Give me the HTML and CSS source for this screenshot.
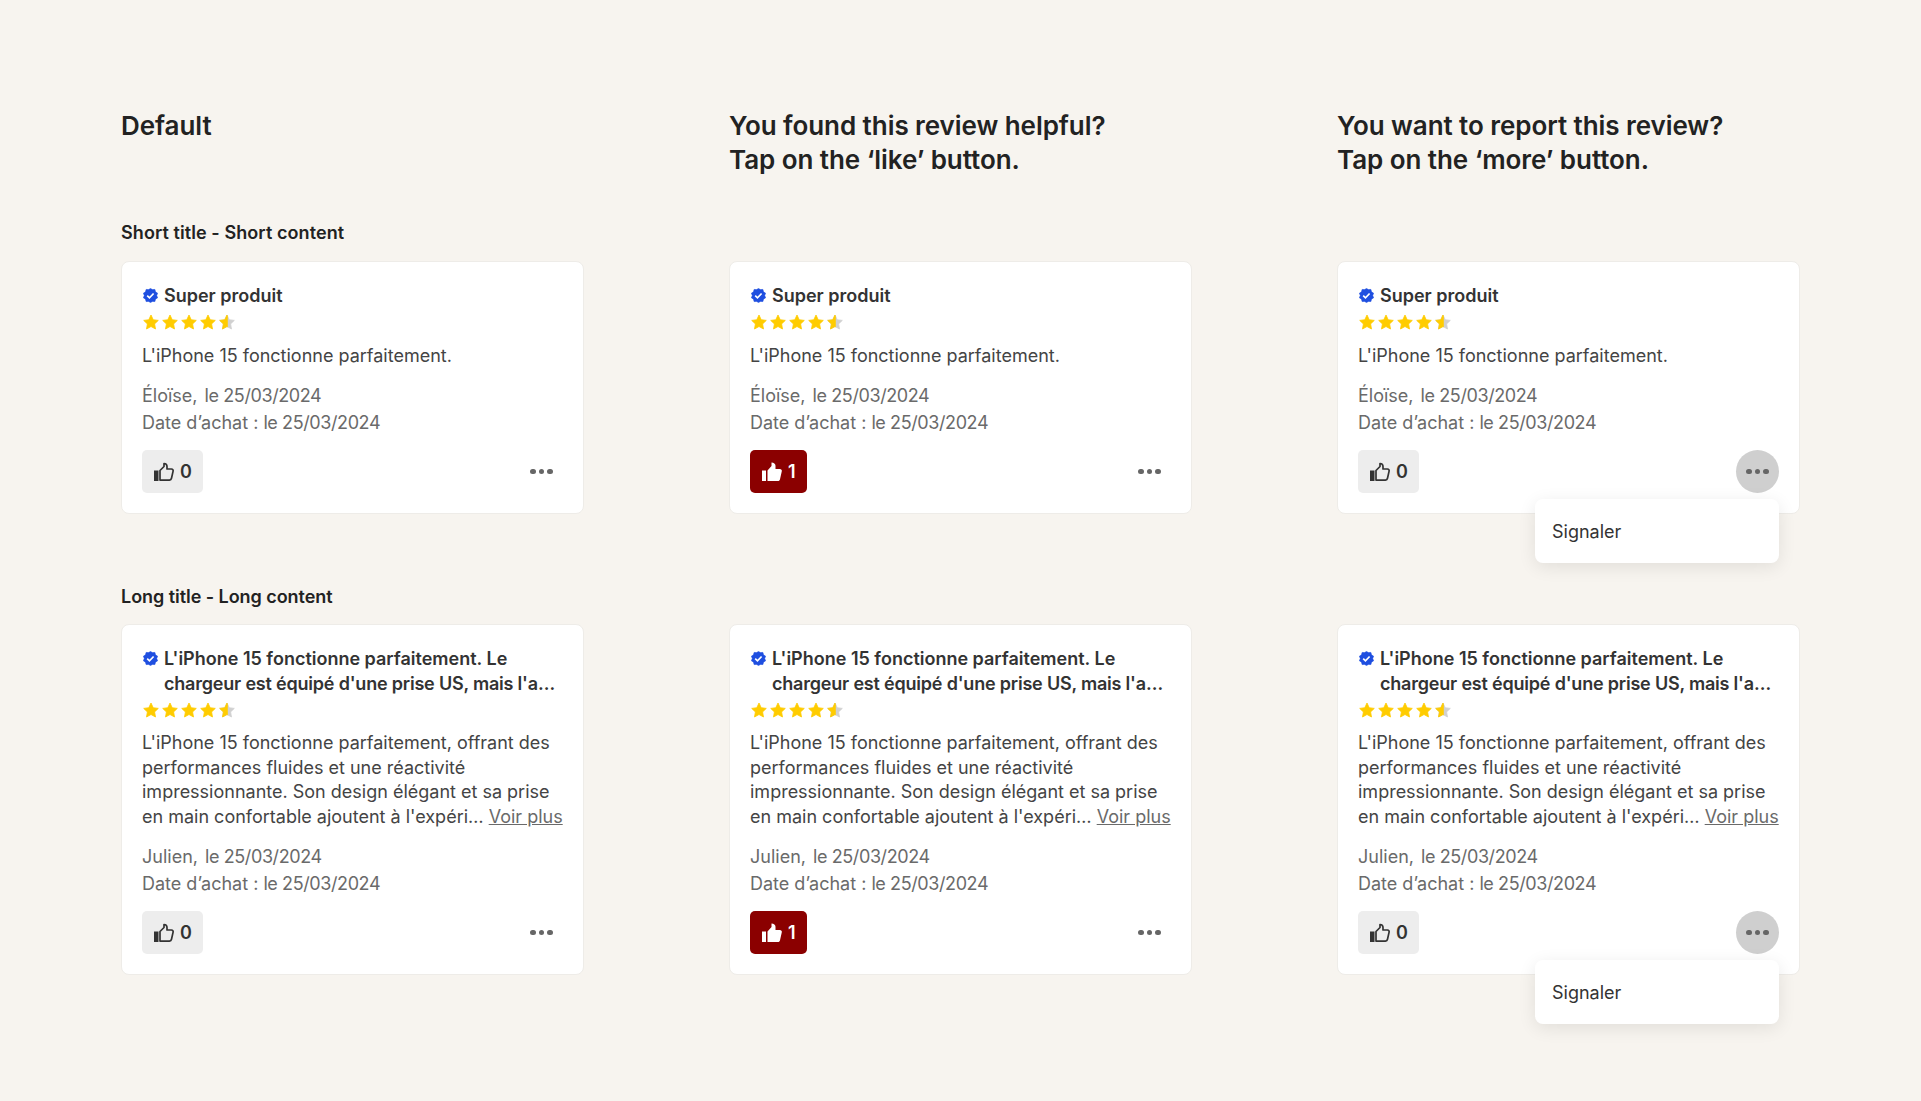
FILE: index.html
```html
<!DOCTYPE html>
<html lang="fr">
<head>
    <meta charset="UTF-8">
    <meta name="viewport" content="width=device-width, initial-scale=1.0">
    <title>Review card</title>
    <link rel="stylesheet" href="styles.css">
</head>
<body>
    <svg class="defs" width="0" height="0">
        <defs>
            <symbol id="badge" viewBox="0 0 16 16">
                <polygon fill="#1f4fe0" stroke="#1f4fe0" stroke-width="0.6" stroke-linejoin="round" points="8,0.5 10.04,1.72 12.7,1.53 13.34,4.12 15.61,5.53 14.6,8 15.61,10.47 13.34,11.88 12.7,14.47 10.04,14.28 8,15.5 5.96,14.28 3.3,14.47 2.66,11.88 0.39,10.47 1.4,8 0.39,5.53 2.66,4.12 3.3,1.53 5.96,1.72"/>
                <path fill="none" stroke="#fff" stroke-width="1.8" d="M4.5 8.2l2.4 2.3 4.4-4.6"/>
            </symbol>
            <symbol id="star" viewBox="0 0 16 16">
                <path stroke-width="0.8" stroke-linejoin="round" d="M8 1l2.2 4.7 5.1.7-3.7 3.5.9 5.1L8 12.5l-4.5 2.5.9-5.1L.7 6.4l5.1-.7z"/>
            </symbol>
            <symbol id="thumb-line" viewBox="0 0 22 22">
                <path fill="#333" d="M1 9.5h4.5V20H1z"/>
                <path fill="none" stroke="#333" stroke-width="1.7" stroke-linejoin="round" d="M7 9.5L11 5.5V2.5c1.8 0 3 1.3 3 3V8h4.5c1.2 0 1.9 1 1.6 2.1l-1.6 7.2c-.2 1-1 1.8-2 1.8H7z"/>
            </symbol>
            <symbol id="thumb-full" viewBox="0 0 22 22">
                <path fill="#fff" d="M1 9.5h4V20H1zM6.5 9.5L10.5 5V1.5c2.3 0 4 1.5 4 3.3V8h4.3c1.4 0 2.3 1 2 2.2l-1.8 8c-.2 1-1 1.8-2 1.8H6.5z"/>
            </symbol>
        </defs>
    </svg>

    <main class="board">
        <h2 class="col-title">Default</h2>
        <h2 class="col-title">You found this review helpful?<br>Tap on the ‘like’ button.</h2>
        <h2 class="col-title">You want to report this review?<br>Tap on the ‘more’ button.</h2>

        <h3 class="row-title">Short title - Short content</h3>

        <article class="card">
            <h4 class="review-title"><svg class="badge"><use href="#badge"/></svg>Super produit</h4>
            <div class="stars"><svg class="star"><use href="#star"/></svg><svg class="star"><use href="#star"/></svg><svg class="star"><use href="#star"/></svg><svg class="star"><use href="#star"/></svg><span class="half"><svg class="star off"><use href="#star"/></svg><svg class="star half-on"><use href="#star"/></svg></span></div>
            <p class="review-text">L'iPhone 15 fonctionne parfaitement.</p>
            <p class="meta"><span class="author">Éloïse,</span> <span class="date">le 25/03/2024</span><br>Date d’achat : <span class="date">le 25/03/2024</span></p>
            <div class="actions">
                <button class="like"><svg class="thumb"><use href="#thumb-line"/></svg>0</button>
                <button class="more"><i></i><i></i><i></i></button>
            </div>
        </article>
        <article class="card">
            <h4 class="review-title"><svg class="badge"><use href="#badge"/></svg>Super produit</h4>
            <div class="stars"><svg class="star"><use href="#star"/></svg><svg class="star"><use href="#star"/></svg><svg class="star"><use href="#star"/></svg><svg class="star"><use href="#star"/></svg><span class="half"><svg class="star off"><use href="#star"/></svg><svg class="star half-on"><use href="#star"/></svg></span></div>
            <p class="review-text">L'iPhone 15 fonctionne parfaitement.</p>
            <p class="meta"><span class="author">Éloïse,</span> <span class="date">le 25/03/2024</span><br>Date d’achat : <span class="date">le 25/03/2024</span></p>
            <div class="actions">
                <button class="like liked"><svg class="thumb"><use href="#thumb-full"/></svg>1</button>
                <button class="more"><i></i><i></i><i></i></button>
            </div>
        </article>
        <article class="card">
            <h4 class="review-title"><svg class="badge"><use href="#badge"/></svg>Super produit</h4>
            <div class="stars"><svg class="star"><use href="#star"/></svg><svg class="star"><use href="#star"/></svg><svg class="star"><use href="#star"/></svg><svg class="star"><use href="#star"/></svg><span class="half"><svg class="star off"><use href="#star"/></svg><svg class="star half-on"><use href="#star"/></svg></span></div>
            <p class="review-text">L'iPhone 15 fonctionne parfaitement.</p>
            <p class="meta"><span class="author">Éloïse,</span> <span class="date">le 25/03/2024</span><br>Date d’achat : <span class="date">le 25/03/2024</span></p>
            <div class="actions">
                <button class="like"><svg class="thumb"><use href="#thumb-line"/></svg>0</button>
                <button class="more open"><i></i><i></i><i></i></button>
            </div>
            <div class="menu">Signaler</div>
        </article>

        <h3 class="row-title second">Long title - Long content</h3>

        <article class="card">
            <h4 class="review-title"><svg class="badge"><use href="#badge"/></svg>L'iPhone 15 fonctionne parfaitement. Le<br><span class="cut">chargeur est équipé d'une prise US, mais l'a…</span></h4>
            <div class="stars"><svg class="star"><use href="#star"/></svg><svg class="star"><use href="#star"/></svg><svg class="star"><use href="#star"/></svg><svg class="star"><use href="#star"/></svg><span class="half"><svg class="star off"><use href="#star"/></svg><svg class="star half-on"><use href="#star"/></svg></span></div>
            <p class="review-text">L'iPhone 15 fonctionne parfaitement, offrant des<br>performances fluides et une réactivité<br>impressionnante. Son design élégant et sa prise<br>en main confortable ajoutent à l'expéri… <a class="see-more">Voir plus</a></p>
            <p class="meta"><span class="author">Julien,</span> <span class="date">le 25/03/2024</span><br>Date d’achat : <span class="date">le 25/03/2024</span></p>
            <div class="actions">
                <button class="like"><svg class="thumb"><use href="#thumb-line"/></svg>0</button>
                <button class="more"><i></i><i></i><i></i></button>
            </div>
        </article>
        <article class="card">
            <h4 class="review-title"><svg class="badge"><use href="#badge"/></svg>L'iPhone 15 fonctionne parfaitement. Le<br><span class="cut">chargeur est équipé d'une prise US, mais l'a…</span></h4>
            <div class="stars"><svg class="star"><use href="#star"/></svg><svg class="star"><use href="#star"/></svg><svg class="star"><use href="#star"/></svg><svg class="star"><use href="#star"/></svg><span class="half"><svg class="star off"><use href="#star"/></svg><svg class="star half-on"><use href="#star"/></svg></span></div>
            <p class="review-text">L'iPhone 15 fonctionne parfaitement, offrant des<br>performances fluides et une réactivité<br>impressionnante. Son design élégant et sa prise<br>en main confortable ajoutent à l'expéri… <a class="see-more">Voir plus</a></p>
            <p class="meta"><span class="author">Julien,</span> <span class="date">le 25/03/2024</span><br>Date d’achat : <span class="date">le 25/03/2024</span></p>
            <div class="actions">
                <button class="like liked"><svg class="thumb"><use href="#thumb-full"/></svg>1</button>
                <button class="more"><i></i><i></i><i></i></button>
            </div>
        </article>
        <article class="card">
            <h4 class="review-title"><svg class="badge"><use href="#badge"/></svg>L'iPhone 15 fonctionne parfaitement. Le<br><span class="cut">chargeur est équipé d'une prise US, mais l'a…</span></h4>
            <div class="stars"><svg class="star"><use href="#star"/></svg><svg class="star"><use href="#star"/></svg><svg class="star"><use href="#star"/></svg><svg class="star"><use href="#star"/></svg><span class="half"><svg class="star off"><use href="#star"/></svg><svg class="star half-on"><use href="#star"/></svg></span></div>
            <p class="review-text">L'iPhone 15 fonctionne parfaitement, offrant des<br>performances fluides et une réactivité<br>impressionnante. Son design élégant et sa prise<br>en main confortable ajoutent à l'expéri… <a class="see-more">Voir plus</a></p>
            <p class="meta"><span class="author">Julien,</span> <span class="date">le 25/03/2024</span><br>Date d’achat : <span class="date">le 25/03/2024</span></p>
            <div class="actions">
                <button class="like"><svg class="thumb"><use href="#thumb-line"/></svg>0</button>
                <button class="more open"><i></i><i></i><i></i></button>
            </div>
            <div class="menu">Signaler</div>
        </article>
    </main>
</body>
</html>
```

FILE: styles.css
```css
* {
    box-sizing: border-box;
}

body {
    margin: 0;
    min-height: 1101px;
    background-color: #f7f4ef;
    font-family: Inter, "Open Sans", sans-serif;
    color: #222;
}

.defs {
    display: block;
}

.board {
    display: grid;
    grid-template-columns: repeat(3, 463px);
    column-gap: 145px;
    padding: 109px 0 0 121px;
    align-items: start;
}

.col-title {
    margin: 0;
    min-height: 68px;
    font-size: 26px;
    line-height: 34px;
    font-weight: 600;
    letter-spacing: -0.06px;
}

.row-title {
    grid-column: 1 / -1;
    margin: 44px 0 16px;
    font-size: 18px;
    line-height: 24px;
    font-weight: 600;
    letter-spacing: 0.08px;
}

.row-title.second {
    margin: 71px 0 15px;
    letter-spacing: -0.05px;
}

.card {
    position: relative;
    padding: 22px 20px 20px;
    background: #fff;
    border: 1px solid #eeece8;
    border-radius: 8px;
    white-space: nowrap;
}

.review-title {
    position: relative;
    margin: 0;
    padding-left: 22px;
    font-size: 18px;
    line-height: 24.5px;
    font-weight: 600;
    color: #333;
}

.cut {
    letter-spacing: -0.2px;
}

.badge {
    position: absolute;
    left: 1px;
    top: 4px;
    width: 15px;
    height: 15px;
}

.stars {
    display: flex;
    gap: 3px;
    height: 21px;
    margin: 3px 0 0 1px;
    align-items: center;
}

.star {
    display: block;
    width: 16px;
    height: 16px;
    fill: #ffcc00;
    stroke: #ffcc00;
}

.half {
    position: relative;
    display: block;
    width: 16px;
    height: 16px;
}

.half .star {
    position: absolute;
    left: 0;
    top: 0;
}

.star.off {
    fill: #d0d0d0;
    stroke: #d0d0d0;
}

.star.half-on {
    clip-path: inset(0 45% 0 0);
}

.review-text {
    margin: 11px 0 0;
    font-size: 18px;
    line-height: 24.5px;
    color: #444;
}

.see-more {
    color: #6a6a6a;
    text-decoration: underline;
}

.meta {
    margin: 14px 0 0;
    font-size: 18px;
    line-height: 27px;
    color: #6a6a6a;
}

.author {
    margin-right: 2px;
}

.date {
    letter-spacing: -0.4px;
}

.actions {
    display: flex;
    justify-content: space-between;
    align-items: center;
    margin-top: 14px;
}

.like {
    display: flex;
    align-items: center;
    gap: 5px;
    height: 43px;
    padding: 0 11px;
    border: none;
    border-radius: 5px;
    background: #ededed;
    font-family: inherit;
    font-size: 18px;
    font-weight: 600;
    color: #333;
}

.like.liked {
    background: #8b0000;
    color: #fff;
}

.thumb {
    width: 22px;
    height: 22px;
}

.more {
    display: flex;
    align-items: center;
    justify-content: center;
    gap: 3px;
    width: 43px;
    height: 43px;
    padding: 0;
    border: none;
    border-radius: 50%;
    background: transparent;
}

.more.open {
    background: #cfcfcf;
}

.more i {
    width: 5.5px;
    height: 5.5px;
    border-radius: 50%;
    background: #666;
}

.menu {
    position: absolute;
    right: 20px;
    bottom: -50px;
    width: 244px;
    height: 64px;
    padding: 0 17px;
    display: flex;
    align-items: center;
    background: #fff;
    border-radius: 8px;
    box-shadow: 0 4px 18px rgba(0, 0, 0, 0.09);
    font-size: 18px;
    color: #333;
}
```
